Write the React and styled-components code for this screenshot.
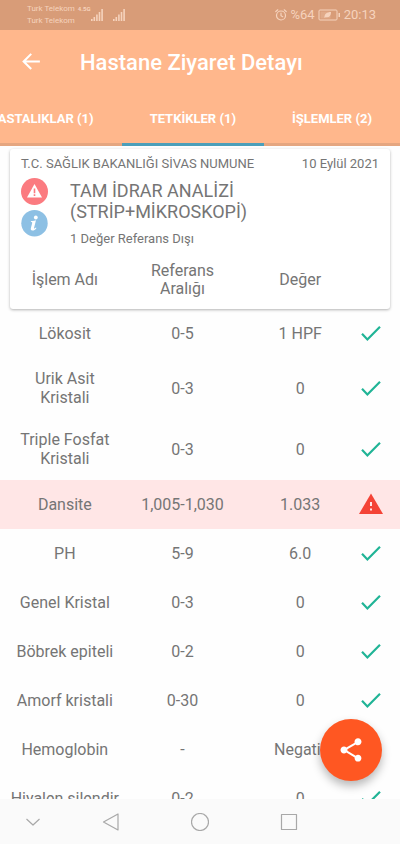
import React from "react";
import styled, { createGlobalStyle, css } from "styled-components";

const GlobalStyle = createGlobalStyle`
  *, *::before, *::after { box-sizing: border-box; }
  body {
    margin: 0;
    background: #fefefe;
    color: #757575;
    font-family: Roboto, "Noto Sans", sans-serif;
    font-size: 16px;
  }
  button { font: inherit; color: inherit; border: 0; padding: 0; background: none; }
  svg { display: block; flex: none; }
`;

const Screen = styled.div`
  display: flex;
  flex-direction: column;
  height: 100vh;
  overflow: hidden;
`;

const StatusBar = styled.div`
  display: flex;
  align-items: center;
  justify-content: space-between;
  flex: none;
  height: 30px;
  padding: 0 24px 0 27px;
  background: #d89c78;
  color: #f6d3bd;
`;

const StatusGroup = styled.div`
  display: flex;
  align-items: center;
  gap: 3px;
  font-size: 13px;
  line-height: 16px;
`;

const Carriers = styled.div`
  font-size: 8px;
  line-height: 12px;
  white-space: nowrap;
`;

const AppBar = styled.header`
  flex: none;
  background: #ffb78c;
  color: #fff;
`;

const TitleRow = styled.div`
  display: flex;
  align-items: center;
  gap: 37px;
  height: 65px;
  padding-left: 18px;
`;

const BackButton = styled.button`
  display: flex;
`;

const Title = styled.h1`
  margin: 0;
  font-size: 22px;
  font-weight: 500;
  line-height: 28px;
  white-space: nowrap;
`;

const Tabs = styled.nav`
  display: flex;
  justify-content: flex-end;
  overflow: hidden;
  height: 51px;
`;

const Tab = styled.button`
  flex: none;
  padding: 0 28px;
  font-size: 13px;
  font-weight: 700;
  line-height: 46px;
  white-space: nowrap;
  border-bottom: 3px solid ${(p) => (p.$active ? "#4b9fba" : "#e5a680")};
`;

const Content = styled.main`
  flex: 1;
  min-height: 0;
  overflow: hidden;
  padding-top: 3px;
`;

const Results = styled.table`
  display: block;
  width: 100%;
  line-height: 19px;
`;

const Card = styled.thead`
  display: block;
  margin: 0 10px;
  padding: 6px 0 0;
  background: #fff;
  border-radius: 3px;
  box-shadow: 0 1px 3px rgba(0, 0, 0, 0.3);
`;

const InfoRow = styled.tr`
  display: block;
`;

const InfoCell = styled.th`
  display: block;
  padding: 0 11px;
  font-weight: 400;
  text-align: left;
`;

const Meta = styled.div`
  display: flex;
  justify-content: space-between;
  font-size: 13px;
  line-height: 18px;
  white-space: nowrap;
`;

const Summary = styled.div`
  display: flex;
  gap: 22px;
  padding-top: 5px;
`;

const Badges = styled.div`
  display: flex;
  flex-direction: column;
  gap: 5px;
`;

const Analysis = styled.h2`
  margin: 2px 0 0;
  font-size: 18px;
  font-weight: 400;
  line-height: 21px;
`;

const Note = styled.p`
  margin: 8px 0 0;
  font-size: 13px;
  line-height: 18px;
`;

const columns = css`
  display: grid;
  grid-template-columns: repeat(3, 1fr) 24px;
  align-items: center;
`;

const HeadRow = styled.tr`
  ${columns}
  margin: 0 -4px;
  padding: 14px 11px 11px 0;
  line-height: 18px;
`;

const HeadCell = styled.th`
  padding: 0 4px;
  font-size: 16px;
  font-weight: 400;
  text-align: center;
`;

const Body = styled.tbody`
  display: block;
`;

const Row = styled.tr`
  ${columns}
  min-height: 49px;
  padding: 11px 17px 12px 6px;
  background: ${(p) => (p.$alert ? "#ffe6e6" : "transparent")};
`;

const Cell = styled.td`
  padding: 0 4px;
  font-size: 16px;
  text-align: center;
`;

const IconCell = styled.td`
  padding: 0;
`;

const ShareButton = styled.button`
  position: fixed;
  right: 18px;
  bottom: 63px;
  display: flex;
  align-items: center;
  justify-content: center;
  width: 62px;
  height: 62px;
  border-radius: 50%;
  background: #ff5722;
  box-shadow: 0 5px 10px rgba(0, 0, 0, 0.28);
`;

const SystemNav = styled.nav`
  display: flex;
  align-items: center;
  flex: none;
  height: 45px;
  padding: 0 89px 0 22px;
  justify-content: space-between;
  background: #fafafa;
`;

const NavButton = styled.button`
  display: flex;
  justify-content: center;
  width: 44px;
  flex: none;

  &:first-child { width: 22px; }
`;

const Signal = () => (
  <svg width="12" height="12" viewBox="0 0 12 12" fill="currentColor" aria-hidden="true">
    <path d="M0 10h1.600v2H0zM2.500 8h1.600v4H2.500zM5.100 5.500h1.600V12H5.100zM7.700 3h1.600v9H7.700zM10.300 0h1.600v12h-1.600z" />
  </svg>
);

const Network = styled.span`
  align-self: flex-start;
  margin-right: -3px;
  font-size: 6px;
  font-weight: 700;
  line-height: 12px;
`;

const SignalPair = styled.div`
  display: flex;
  gap: 10px;
`;

const Alarm = () => (
  <svg width="12" height="12" viewBox="0 0 12 12" fill="none" stroke="currentColor" strokeWidth="1.2" strokeLinecap="round" aria-hidden="true">
    <circle cx="6" cy="6.5" r="4.5" />
    <path d="M6 4v2.7l1.7 1M.8 2.5 2.8.8M11.2 2.5 9.2.8" />
  </svg>
);

const Battery = () => (
  <svg width="23" height="12" viewBox="0 0 23 12" aria-hidden="true">
    <rect x="1" y="1" width="18" height="10" rx="1" fill="none" stroke="currentColor" />
    <path d="M2.500 2.500h10v7h-10z" fill="currentColor" opacity=".25" />
    <path d="M6.500 9C6 5 9 3 13 3c0 4-2 6-5.500 5.200z" fill="currentColor" />
    <path d="M20.500 4h1.500v4h-1.500z" fill="currentColor" />
  </svg>
);

const BackArrow = () => (
  <svg width="25" height="25" viewBox="0 0 24 24" fill="#fff" aria-hidden="true">
    <path d="M21 10H7.800l5.600-5.600L12 3l-8 8 8 8 1.400-1.400L7.800 12H21v-2z" />
  </svg>
);

const AlertBadge = () => (
  <svg width="27" height="27" viewBox="0 0 27 27" role="img" aria-label="Uyarı">
    <circle cx="13.500" cy="13.500" r="13.500" fill="#fb7b80" />
    <path d="M13.500 6 21 19.500H6z" fill="#fff" />
    <path d="M12.700 10.500h1.600v4.800h-1.600zM12.700 16.300h1.600v1.700h-1.600z" fill="#fb7b80" />
  </svg>
);

const InfoBadge = () => (
  <svg width="27" height="27" viewBox="0 0 27 27" role="img" aria-label="Bilgi">
    <circle cx="13.500" cy="13.200" r="13.200" fill="#8dc0e4" />
    <circle cx="14.800" cy="7.500" r="1.900" fill="#fff" />
    <path d="M10 10.900c1.800.2 3.300-.1 5-.6l-2 7.600c-.2.900.7.700 1.900-.5l.6.500c-1.300 1.900-2.700 2.800-4.200 2.700-1.400-.1-1.800-1-1.400-2.500l1.200-4.600c.3-1.100.1-1.500-1.300-1.700z" fill="#fff" />
  </svg>
);

const Check = () => (
  <svg width="24" height="24" viewBox="0 0 24 24" role="img" aria-label="Normal">
    <path d="M3 12.800 8.400 18.400 21 5.700" fill="none" stroke="#20b496" strokeWidth="2.200" />
  </svg>
);

const Warning = () => (
  <svg width="24" height="24" viewBox="0 0 24 24" role="img" aria-label="Referans dışı">
    <path d="M0 22h24L12 1.500z" fill="#f44336" />
    <path d="M11 10h2v4h-2zM11 16.500h2v2h-2z" fill="#ffe6e6" />
  </svg>
);

const Share = () => (
  <svg width="28" height="28" viewBox="0 0 24 24" fill="#fff" aria-hidden="true">
    <path d="M18 16.080c-.76 0-1.440.3-1.960.77L8.910 12.700c.05-.23.09-.46.09-.7s-.04-.47-.09-.7l7.050-4.110c.54.5 1.250.81 2.040.81 1.660 0 3-1.340 3-3s-1.340-3-3-3-3 1.340-3 3c0 .24.04.47.09.7L8.040 9.810C7.500 9.310 6.790 9 6 9c-1.660 0-3 1.340-3 3s1.340 3 3 3c.79 0 1.500-.31 2.040-.81l7.120 4.160c-.05.21-.08.430-.08.650 0 1.610 1.310 2.920 2.920 2.920s2.920-1.310 2.920-2.920-1.310-2.920-2.920-2.920z" />
  </svg>
);

const navIcons = [
  { label: "Gizle", width: 16, path: "M1.500 6 8 12l6.500-6" },
  { label: "Geri", width: 18, path: "M16 1v16L1.500 9z" },
  { label: "Ana ekran", width: 18, path: "M17.500 9a8.500 8.500 0 1 1-17 0 8.500 8.500 0 0 1 17 0z" },
  { label: "Son uygulamalar", width: 18, path: "M1.500 1.500h15v15h-15z" },
];

const rows = [
  ["Lökosit", "0-5", "1 HPF"],
  ["Urik Asit Kristali", "0-3", "0"],
  ["Triple Fosfat Kristali", "0-3", "0"],
  ["Dansite", "1,005-1,030", "1.033", true],
  ["PH", "5-9", "6.0"],
  ["Genel Kristal", "0-3", "0"],
  ["Böbrek epiteli", "0-2", "0"],
  ["Amorf kristali", "0-30", "0"],
  ["Hemoglobin", "-", "Negatif"],
  ["Hiyalen silendir", "0-2", "0"],
];

export default function App() {
  return (
    <Screen>
      <GlobalStyle />
      <StatusBar>
        <StatusGroup>
          <Carriers>
            <div>Turk Telekom</div>
            <div>Turk Telekom</div>
          </Carriers>
          <Network>4.5G</Network>
          <SignalPair>
            <Signal />
            <Signal />
          </SignalPair>
        </StatusGroup>
        <StatusGroup>
          <Alarm />
          <span>%64</span>
          <Battery />
          <span>20:13</span>
        </StatusGroup>
      </StatusBar>
      <AppBar>
        <TitleRow>
          <BackButton aria-label="Geri">
            <BackArrow />
          </BackButton>
          <Title>Hastane Ziyaret Detayı</Title>
        </TitleRow>
        <Tabs>
          <Tab>HASTALIKLAR (1)</Tab>
          <Tab $active aria-current="page">TETKİKLER (1)</Tab>
          <Tab>İŞLEMLER (2)</Tab>
        </Tabs>
      </AppBar>
      <Content>
        <Results>
          <Card>
            <InfoRow>
              <InfoCell colSpan={4}>
                <Meta>
                  <span>T.C. SAĞLIK BAKANLIĞI SİVAS NUMUNE</span>
                  <span>10 Eylül 2021</span>
                </Meta>
                <Summary>
                  <Badges>
                    <AlertBadge />
                    <InfoBadge />
                  </Badges>
                  <div>
                    <Analysis>
                      TAM İDRAR ANALİZİ
                      <br />
                      (STRİP+MİKROSKOPİ)
                    </Analysis>
                    <Note>1 Değer Referans Dışı</Note>
                  </div>
                </Summary>
              </InfoCell>
            </InfoRow>
            <HeadRow>
              <HeadCell scope="col">İşlem Adı</HeadCell>
              <HeadCell scope="col">Referans Aralığı</HeadCell>
              <HeadCell scope="col">Değer</HeadCell>
            </HeadRow>
          </Card>
          <Body>
            {rows.map(([name, range, value, alert]) => (
              <Row key={name} $alert={alert}>
                <Cell>{name}</Cell>
                <Cell>{range}</Cell>
                <Cell>{value}</Cell>
                <IconCell>{alert ? <Warning /> : <Check />}</IconCell>
              </Row>
            ))}
          </Body>
        </Results>
      </Content>
      <ShareButton aria-label="Paylaş">
        <Share />
      </ShareButton>
      <SystemNav>
        {navIcons.map(({ label, width, path }) => (
          <NavButton key={label} aria-label={label}>
            <svg width={width} height="18" viewBox={`0 0 ${width} 18`} fill="none" stroke="#a8a8a8" strokeWidth="1.200" strokeLinejoin="round">
              <path d={path} />
            </svg>
          </NavButton>
        ))}
      </SystemNav>
    </Screen>
  );
}
